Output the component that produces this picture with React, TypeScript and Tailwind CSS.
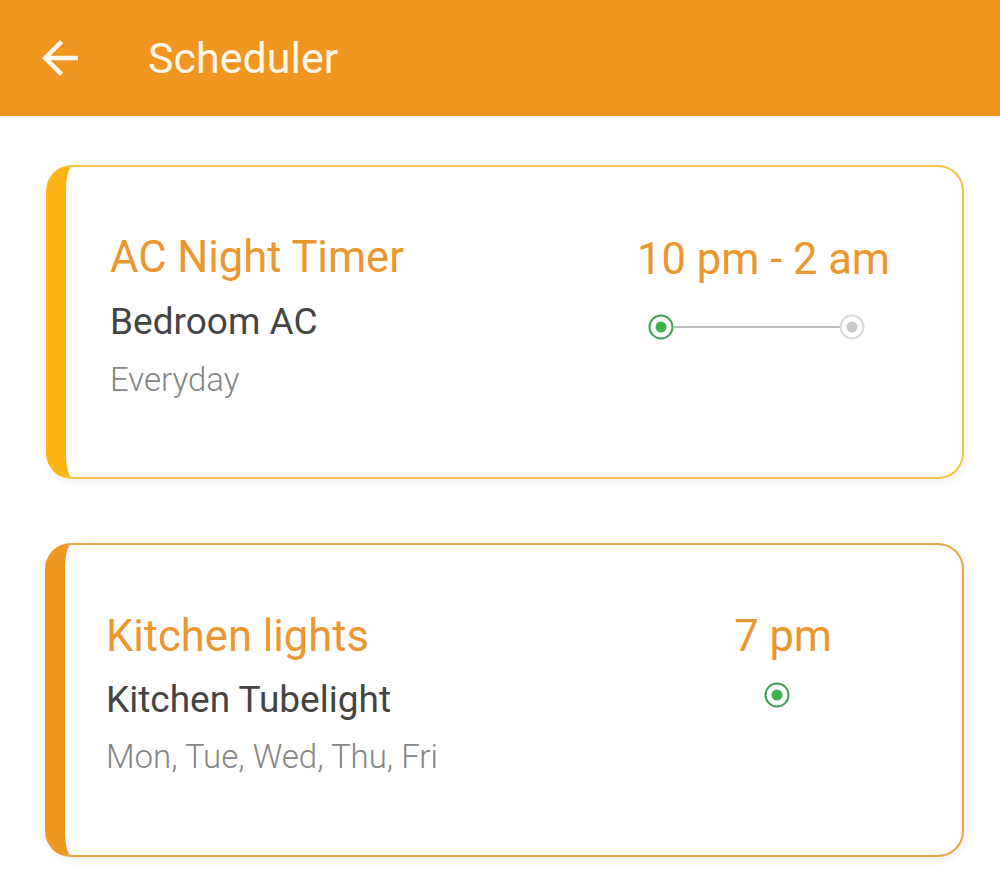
import React from 'react';

const Dot = ({ active }: { active: boolean }) => (
  <svg width="28" height="28" viewBox="0 0 28 28">
    <circle cx="14" cy="14" r="11.5" fill="white" stroke={active ? '#3f9e55' : '#d9d9d9'} strokeWidth="2" />
    <circle cx="14" cy="14" r="5.5" fill={active ? '#3db24c' : '#c8c8c8'} />
  </svg>
);

export default function App() {
  return (
    <div className="min-h-screen bg-white" style={{ fontFamily: 'Roboto, "Noto Sans", sans-serif' }}>
      {/* Top bar */}
      <header className="h-[116px] bg-[#f0951f] flex items-center">
        <svg width="54" height="54" viewBox="0 0 24 24" className="ml-[33px]" fill="#fff8ea">
          <path d="M20 11H7.83l5.59-5.59L12 4l-8 8 8 8 1.41-1.41L7.83 13H20v-2z" />
        </svg>
        <h1 className="ml-[61px] text-[43px] leading-none text-[#fff8ea]">Scheduler</h1>
      </header>

      <main className="pt-[49px] pl-[46px] pr-[36px] flex flex-col gap-[64px]">
        {/* Card 1 */}
        <section className="h-[314px] rounded-[26px] border-2 border-[#f3c443] border-l-[20px] border-l-[#fdb515] bg-white shadow-[2px_4px_8px_rgba(0,0,0,0.06)] flex justify-between">
          <div className="pl-[44px] pt-[59px]">
            <h2 className="text-[43.5px] leading-[64px] text-[#e9972e]">AC Night Timer</h2>
            <p className="text-[37px] leading-[64px] text-[#444444]">Bedroom AC</p>
            <p className="text-[33px] leading-[52px] font-light text-[#858585]">Everyday</p>
          </div>
          <div className="pt-[61px] pr-[72px] flex flex-col items-start">
            <span className="text-[43.5px] leading-[64px] text-[#e9972e]">10 pm - 2 am</span>
            <div className="mt-[21px] ml-[10px] flex items-center">
              <Dot active />
              <div className="w-[167px] h-[2px] bg-[#bdbdbd] -mx-[2px]" />
              <Dot active={false} />
            </div>
          </div>
        </section>

        {/* Card 2 */}
        <section className="h-[314px] rounded-[26px] border-2 border-[#e9a341] border-l-[20px] border-l-[#f0951f] bg-white shadow-[2px_4px_8px_rgba(0,0,0,0.06)] flex justify-between -ml-px">
          <div className="pl-[41px] pt-[60px]">
            <h2 className="text-[43.5px] leading-[64px] text-[#e9972e]">Kitchen lights</h2>
            <p className="text-[37px] leading-[62px] text-[#444444]">Kitchen Tubelight</p>
            <p className="text-[33px] leading-[52px] font-light text-[#858585]">Mon, Tue, Wed, Thu, Fri</p>
          </div>
          <div className="pt-[60px] pr-[130px] flex flex-col items-start">
            <span className="text-[43.5px] leading-[64px] text-[#e9972e]">7 pm</span>
            <div className="mt-[12px] ml-[29px] flex items-center">
              <Dot active />
            </div>
          </div>
        </section>
      </main>
    </div>
  );
}
